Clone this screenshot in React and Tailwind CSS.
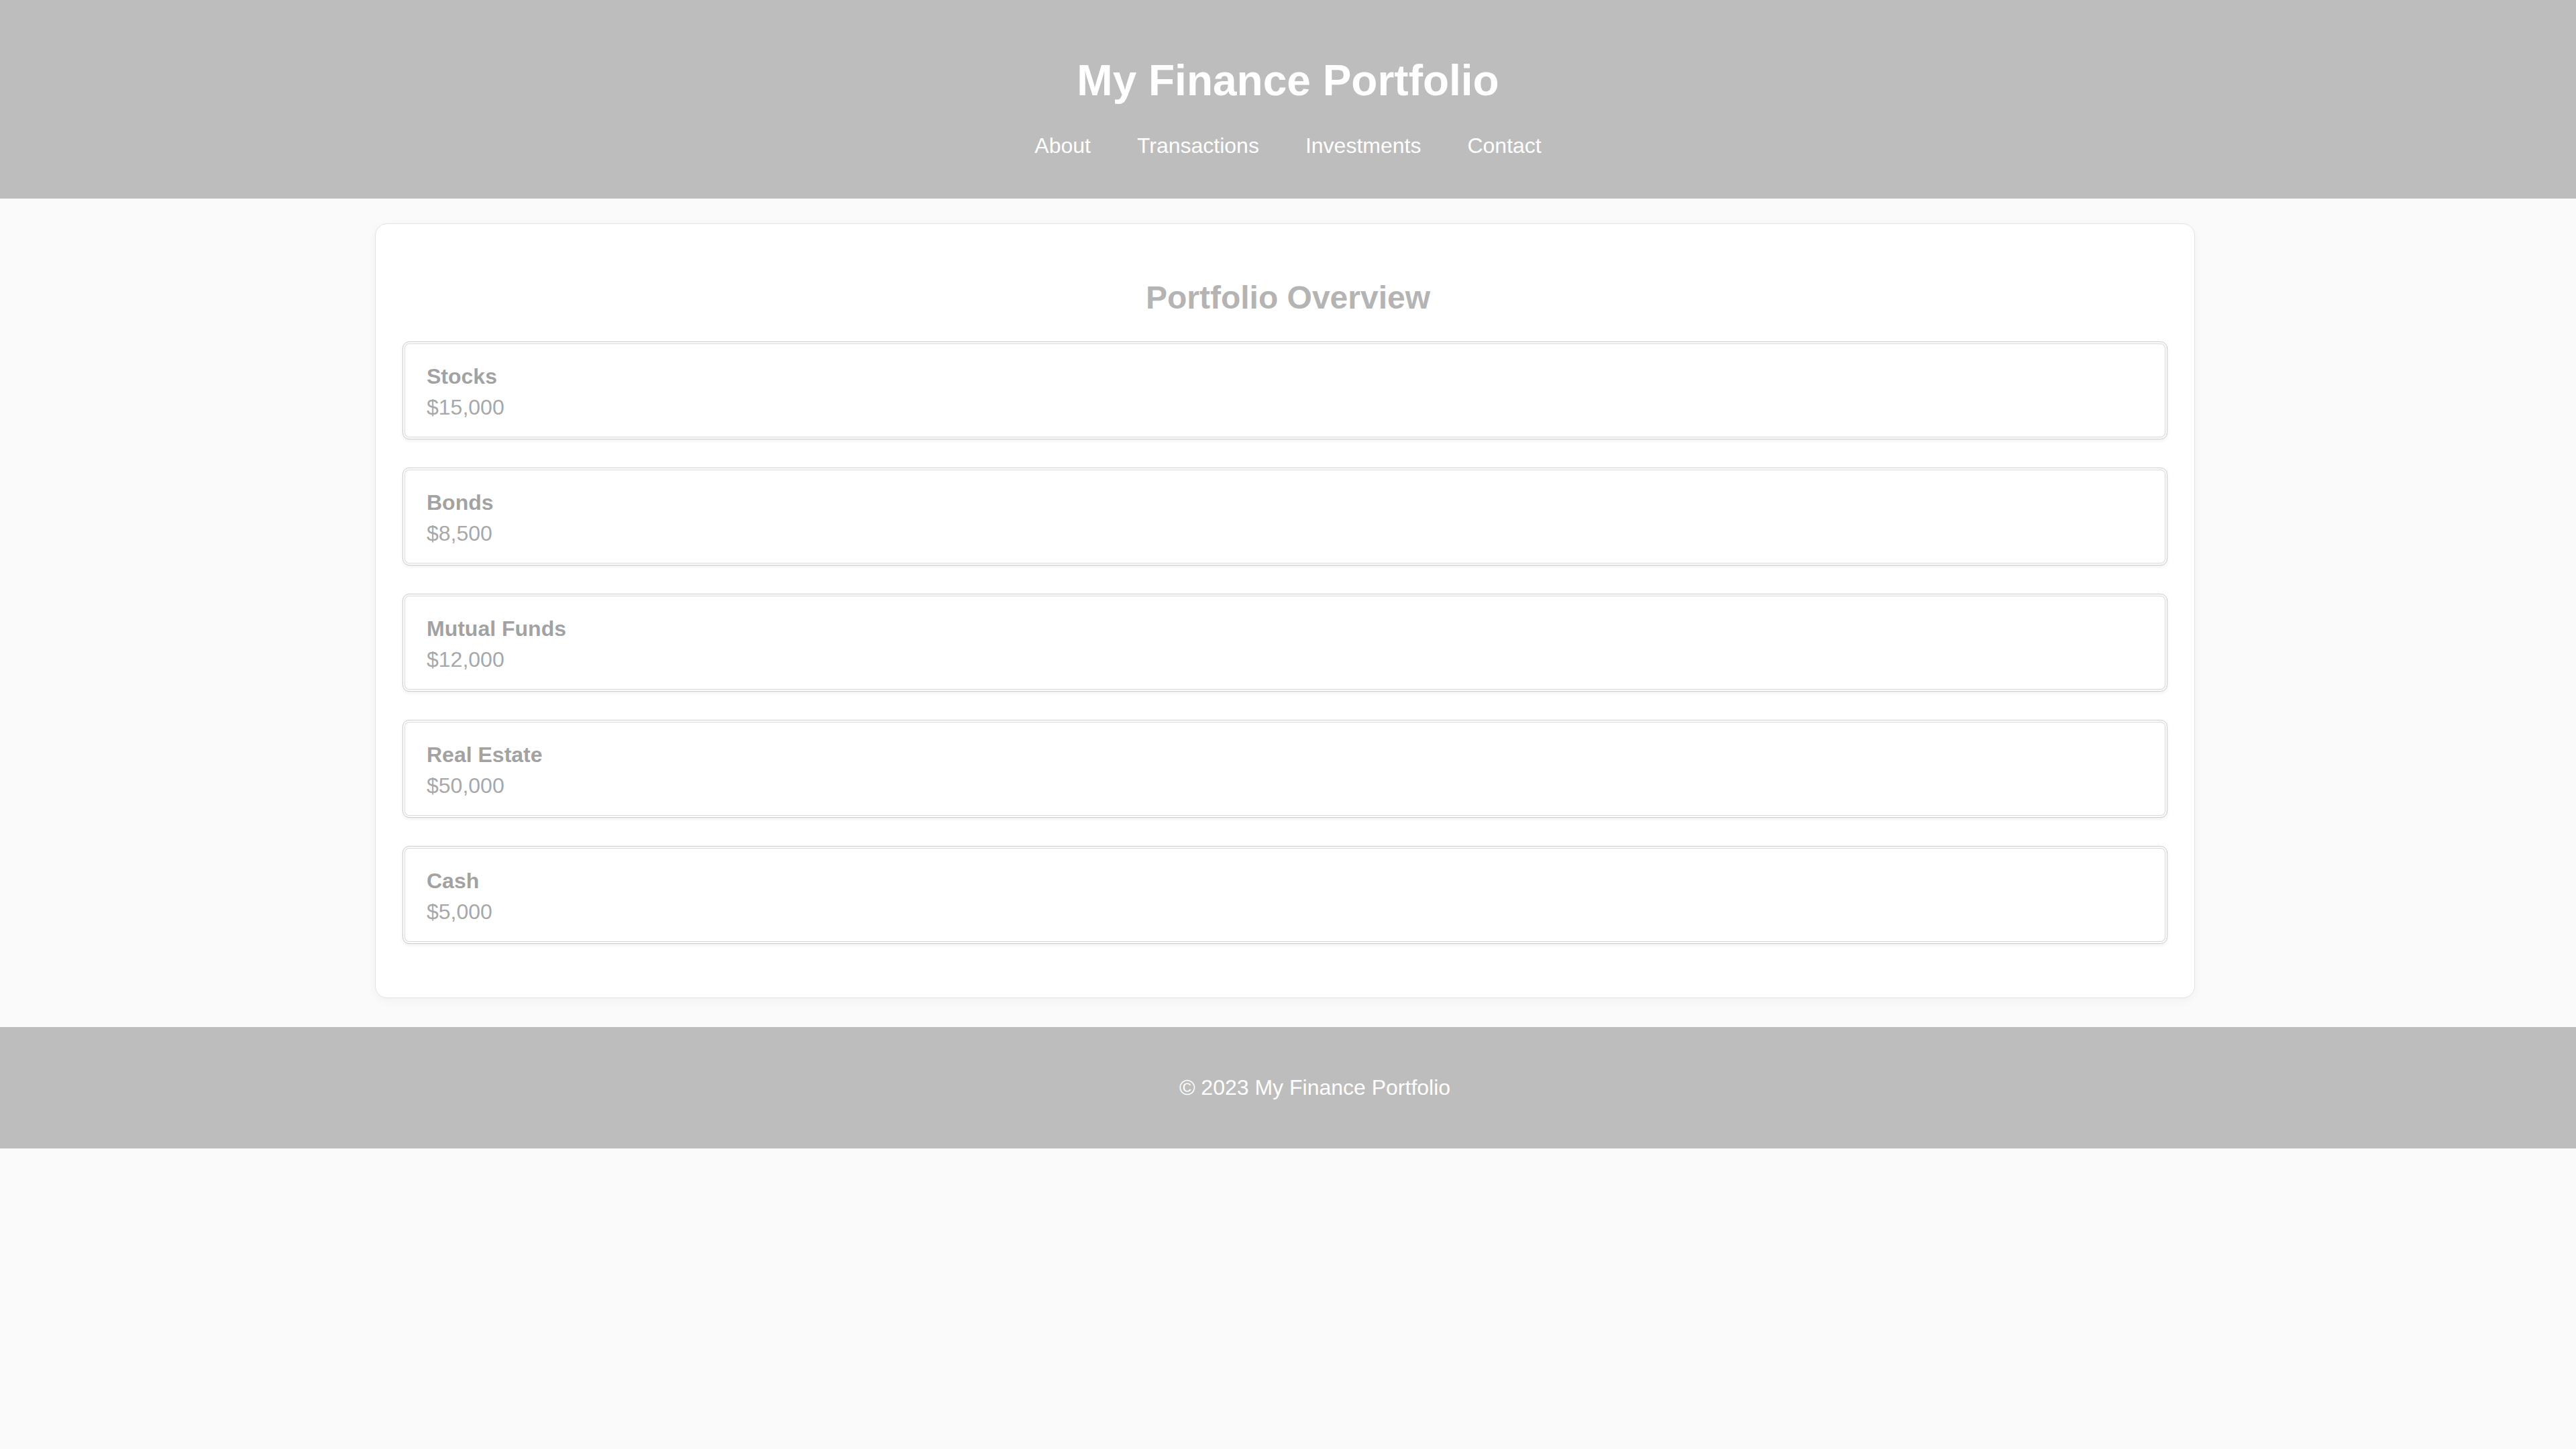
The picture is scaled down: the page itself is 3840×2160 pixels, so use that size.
import React from 'react';

const holdings = [
  { name: 'Stocks', value: '$15,000' },
  { name: 'Bonds', value: '$8,500' },
  { name: 'Mutual Funds', value: '$12,000' },
  { name: 'Real Estate', value: '$50,000' },
  { name: 'Cash', value: '$5,000' },
];

const navLinks = ['About', 'Transactions', 'Investments', 'Contact'];

const App = () => {
  return (
    <div className="min-h-[2160px] bg-[#fafafa] font-['Liberation_Sans',Arial,sans-serif]">
      {/* Header */}
      <header className="bg-[#bdbdbd] pt-[83px] pb-[60px] text-center text-white">
        <h1 className="text-[64px] leading-[74px] font-bold">My Finance Portfolio</h1>
        <nav className="mt-[42px] flex justify-center gap-[69px] text-[32px] leading-[37px]">
          {navLinks.map((link) => (
            <a key={link} href="#" className="text-white">
              {link}
            </a>
          ))}
        </nav>
      </header>

      {/* Overview card */}
      <main className="pt-[37px] pb-[43px]">
        <section className="ml-[559px] w-[2713px] rounded-[18px] border border-[#e2e2e2] bg-white px-[40px] pt-[40px] pb-[80px] shadow-[0_4px_14px_rgba(0,0,0,0.04)]">
          <h2 className="mt-[42px] mb-[38px] pl-[9px] text-center text-[48px] leading-[55px] font-bold text-[#b4b4b4]">
            Portfolio Overview
          </h2>
          <div className="flex flex-col gap-[42px]">
            {holdings.map((item) => (
              <div
                key={item.name}
                className="h-[146px] rounded-[10px] border border-[#cdcdcd] bg-white pl-[35px] pt-[28px] shadow-[inset_0_0_0_2px_#ffffff,inset_0_0_0_3px_#d8d8d8,0_2px_5px_rgba(0,0,0,0.07)]"
              >
                <div className="text-[32px] leading-[46px] font-bold text-[#a2a2a2]">{item.name}</div>
                <div className="text-[32px] leading-[46px] text-[#a8a8a8]">{item.value}</div>
              </div>
            ))}
          </div>
        </section>
      </main>

      {/* Footer */}
      <footer className="bg-[#bdbdbd] py-[72px] pl-[80px] text-center text-[32px] leading-[37px] text-white">
        © 2023 My Finance Portfolio
      </footer>
    </div>
  );
};

export default App;
